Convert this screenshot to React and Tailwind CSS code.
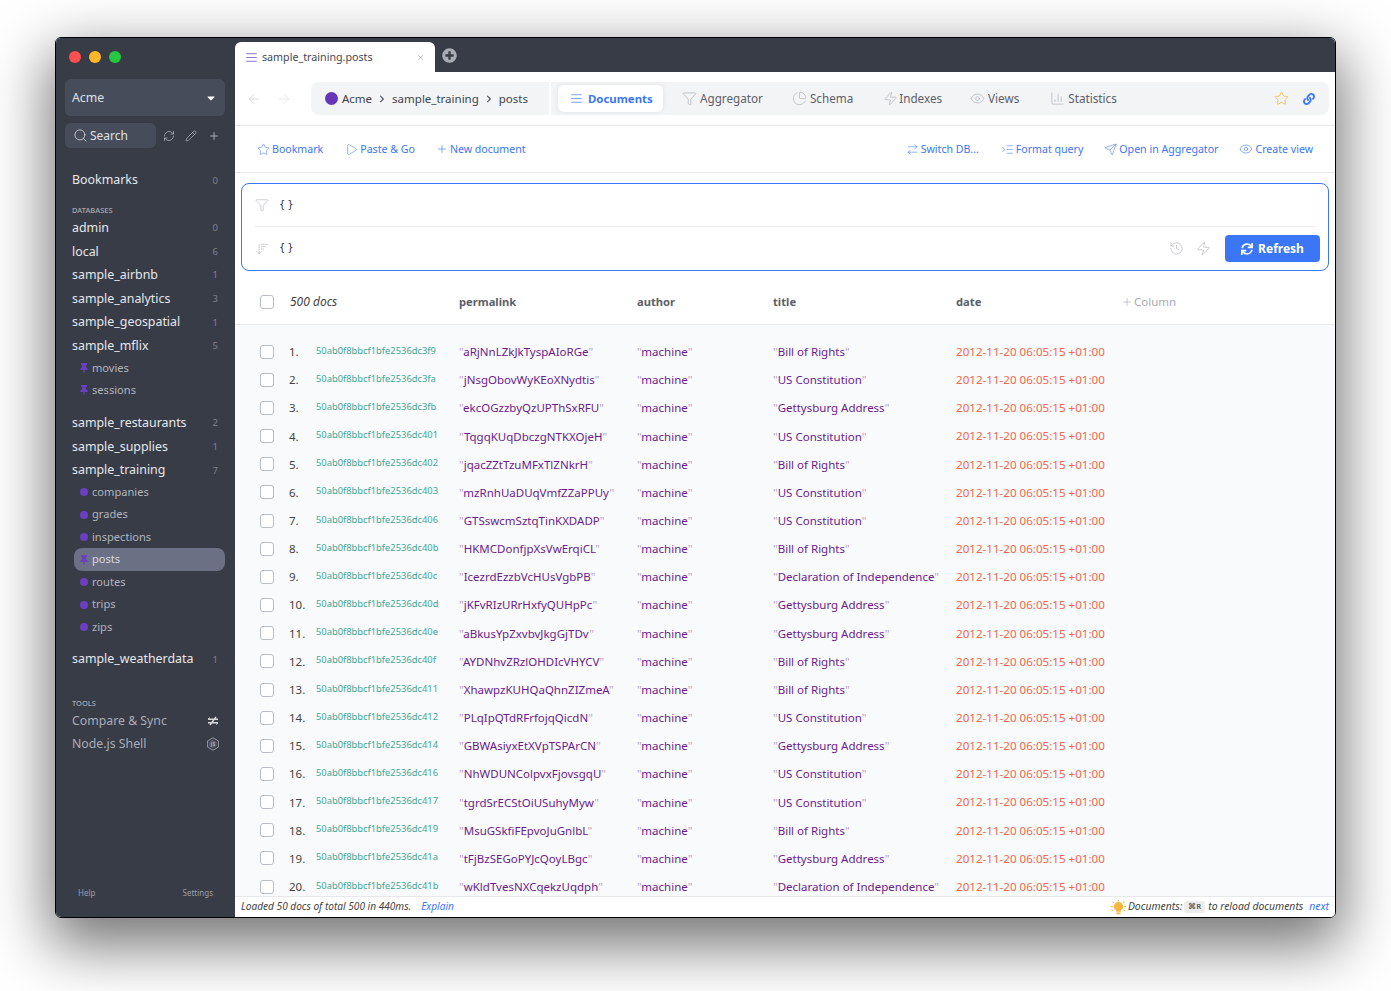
import React from "react";
import { AlignJustify, ArrowLeft, ArrowRight, Funnel, ChartPie, Zap, Eye, ChartColumn, Star, ArrowRightLeft, IndentIncrease, Send, History, Search, RefreshCw, Pencil, Plus, X, ArrowDownWideNarrow, Play } from "lucide-react";
import { FaSync, FaLink, FaPlusCircle, FaThumbtack, FaCaretDown, FaChevronRight } from "react-icons/fa";

const B = "Bill of Rights", U = "US Constitution", G = "Gettysburg Address", D = "Declaration of Independence";
const rows = [
  ["3f9", "aRjNnLZkJkTyspAIoRGe", B], ["3fa", "jNsgObovWyKEoXNydtis", U], ["3fb", "ekcOGzzbyQzUPThSxRFU", G],
  ["401", "TqgqKUqDbczgNTKXOjeH", U], ["402", "jqacZZtTzuMFxTlZNkrH", B], ["403", "mzRnhUaDUqVmfZZaPPUy", U],
  ["406", "GTSswcmSztqTinKXDADP", U], ["40b", "HKMCDonfjpXsVwErqiCL", B], ["40c", "IcezrdEzzbVcHUsVgbPB", D],
  ["40d", "jKFvRIzURrHxfyQUHpPc", G], ["40e", "aBkusYpZxvbvJkgGjTDv", G], ["40f", "AYDNhvZRzlOHDIcVHYCV", B],
  ["411", "XhawpzKUHQaQhnZIZmeA", B], ["412", "PLqIpQTdRFrfojqQicdN", U], ["414", "GBWAsiyxEtXVpTSPArCN", G],
  ["416", "NhWDUNColpvxFjovsgqU", U], ["417", "tgrdSrECStOiUSuhyMyw", U], ["419", "MsuGSkfiFEpvoJuGnlbL", B],
  ["41a", "tFjBzSEGoPYJcQoyLBgc", G], ["41b", "wKldTvesNXCqekzUqdph", D],
];

function Db({ name, n }) {
  return (
    <div className="flex h-[23.6px] items-center justify-between pl-4 pr-[17px] text-[12.4px] text-[#e5e7eb]">
      <span>{name}</span>
      <span className="text-[9.5px] text-[#7d818c]">{n}</span>
    </div>
  );
}

function Coll({ name, pin, active }) {
  return (
    <div className={`ml-[18px] mr-[10px] flex h-[22.5px] items-center gap-[4px] rounded-lg pl-[6px] text-[11.1px] ${active ? "bg-[#6b7084] text-[#d7d9df]" : "text-[#b0b4be]"}`}>
      <span className="flex w-[8px] items-center justify-center">
        {pin ? <FaThumbtack className="h-[10px] w-[10px] shrink-0 text-[#6a3fc0]" /> : <span className="h-[8px] w-[8px] shrink-0 rounded-full bg-[#6a3fc0]" />}
      </span>
      <span>{name}</span>
    </div>
  );
}

function Tab({ icon, label, cls, gap = "gap-[3px]" }) {
  return (
    <div className={`flex items-center text-[11.7px] text-[#5c606a] ${gap} ${cls}`}>
      {icon}
      <span>{label}</span>
    </div>
  );
}

function Act({ icon, label, cls = "" }) {
  return (
    <div className={`flex items-center gap-[2px] text-[10.6px] text-[#3b76f6] ${cls}`}>
      {icon}
      <span>{label}</span>
    </div>
  );
}

const Check = () => <span className="block h-[14px] w-[14px] shrink-0 rounded-[3px] border border-[#b9bdc6] bg-white" />;
const Q = ({ children }) => (
  <span className="whitespace-nowrap">
    <span className="text-[#b9a3c9]">"</span>
    {children}
    <span className="text-[#b9a3c9]">"</span>
  </span>
);

export default function App() {
  const grey = "text-[#a9acb4]";
  return (
    <div className="h-[991px] w-[1391px] overflow-hidden bg-white pl-[55px] pt-[37px] font-['Noto_Sans',sans-serif]">
      <div className="flex h-[881px] w-[1281px] overflow-hidden rounded-[6px] border border-black shadow-[0_22px_60px_6px_rgba(0,0,0,0.55)]">
        {/* Sidebar */}
        <aside className="flex w-[179px] shrink-0 flex-col bg-[#383c47]">
          <div className="flex h-[41px] shrink-0 items-start gap-[8px] pl-[13px] pt-[13px]">
            <span className="h-3 w-3 rounded-full bg-[#fc4f4f]" />
            <span className="h-3 w-3 rounded-full bg-[#fdb727]" />
            <span className="h-3 w-3 rounded-full bg-[#27c83f]" />
          </div>
          <div className="ml-[9px] mr-[10px] flex h-[37px] items-center justify-between rounded-md bg-[#474c5a] pl-[7px] pr-[8px] pt-[1px] text-[12.3px] text-[#dfe1e6]">
            <span>Acme</span>
            <FaCaretDown className="h-[12px] w-[12px] text-white" />
          </div>
          <div className="mx-[9px] mt-[7px] flex h-[25px] items-center">
            <div className="flex h-[25px] w-[91px] items-center gap-[2px] rounded-md bg-[#474c5a] pl-[8px] text-[12px] text-[#dfe1e6]">
              <Search className="h-[15px] w-[15px]" strokeWidth={1.25} />
              <span>Search</span>
            </div>
            <RefreshCw className="ml-[7px] h-[12px] w-[12px] text-[#c5c8cf]" strokeWidth={1.25} />
            <Pencil className="ml-[10px] h-[12px] w-[12px] text-[#c5c8cf]" strokeWidth={1.25} />
            <Plus className="ml-[11px] h-[12px] w-[12px] text-[#c5c8cf]" strokeWidth={1.5} />
          </div>
          <div className="mt-[21px]">
            <Db name="Bookmarks" n="0" />
          </div>
          <div className="mt-[11px] h-[13px] pl-4 text-[7.5px] font-medium leading-[13px] text-[#a4a8b2]">DATABASES</div>
          <Db name="admin" n="0" />
          <Db name="local" n="6" />
          <Db name="sample_airbnb" n="1" />
          <Db name="sample_analytics" n="3" />
          <Db name="sample_geospatial" n="1" />
          <Db name="sample_mflix" n="5" />
          <div className="-mt-[1.5px]" />
          <Coll name="movies" pin />
          <Coll name="sessions" pin />
          <div className="h-[10px]" />
          <Db name="sample_restaurants" n="2" />
          <Db name="sample_supplies" n="1" />
          <Db name="sample_training" n="7" />
          <div className="-mt-[1.5px]" />
          <Coll name="companies" />
          <Coll name="grades" />
          <Coll name="inspections" />
          <Coll name="posts" pin active />
          <Coll name="routes" />
          <Coll name="trips" />
          <Coll name="zips" />
          <div className="h-[9.5px]" />
          <Db name="sample_weatherdata" n="1" />
          <div className="mt-[25px] h-[13px] pl-4 text-[7.5px] font-medium leading-[13px] text-[#a4a8b2]">TOOLS</div>
          <div className="flex h-[23.2px] items-center justify-between pl-4 pr-[16px] text-[12.3px] text-[#a9adb7]">
            <span>Compare &amp; Sync</span>
            <svg viewBox="0 0 12 12" className="h-[12px] w-[12px] text-[#d5d7dc]" fill="none" stroke="currentColor" strokeWidth="1.4">
              <path d="M1 4.2h10M1 7.8h10M9 2 3 10" />
              <path d="M1 4.2 3 2.6M11 7.8 9 9.4" strokeWidth="1" />
            </svg>
          </div>
          <div className="flex h-[23.2px] items-center justify-between pl-4 pr-[15px] text-[12.3px] text-[#a9adb7]">
            <span>Node.js Shell</span>
            <svg viewBox="0 0 14 14" className="h-[14px] w-[14px] text-[#a9adb7]" fill="none" stroke="currentColor" strokeWidth="0.8">
              <path d="M7 .8 12.4 3.9V10.1L7 13.2 1.6 10.1V3.9Z" />
              <path d="M7 2.6 10.8 4.8V9.2L7 11.4 3.2 9.2V4.8Z" fill="currentColor" fillOpacity="0.25" stroke="none" />
              <text x="7" y="9" textAnchor="middle" fontSize="5" fontWeight="700" fill="currentColor" stroke="none">JS</text>
            </svg>
          </div>
          <div className="mb-[12px] mt-auto flex h-[24px] items-center justify-between pl-[22px] pr-[22px] text-[8px] text-[#9b9fa9]">
            <span>Help</span>
            <span>Settings</span>
          </div>
        </aside>

        {/* Main */}
        <main className="flex min-w-0 flex-1 flex-col bg-white">
          <div className="flex h-[34px] shrink-0 items-end bg-[#383c47]">
            <div className="flex h-[30px] w-[200px] items-center rounded-t-md bg-white pl-[10px] pr-[10px] text-[10.7px] text-[#454952]">
              <AlignJustify className="h-[13px] w-[13px] text-[#7a4fc9]" strokeWidth={1.5} />
              <span className="ml-[4px]">sample_training.posts</span>
              <X className="ml-auto h-[9px] w-[9px] text-[#9a9da5]" strokeWidth={1.5} />
            </div>
            <FaPlusCircle className="mb-[9px] ml-[7px] h-[15px] w-[15px] text-[#a9acb4]" />
          </div>

          <div className="flex h-[54px] shrink-0 items-center border-b border-[#e7e8ec] pr-[6px]">
            <ArrowLeft className="ml-[11px] h-[16px] w-[16px] text-[#c4c7cd]" strokeWidth={1} />
            <ArrowRight className="ml-[14px] h-[16px] w-[16px] text-[#dcdee2]" strokeWidth={1} />
            <div className="ml-[19px] flex h-[33px] w-[238px] items-center rounded-l-lg bg-[#f3f4f6] pl-[14px] text-[11.5px] text-[#3f434c]">
              <span className="h-[13px] w-[13px] rounded-full bg-[#6638b8]" />
              <span className="ml-[4px]">Acme</span>
              <FaChevronRight className="mx-[6px] h-[8px] w-[8px] text-[#555962]" />
              <span>sample_training</span>
              <FaChevronRight className="mx-[6px] h-[8px] w-[8px] text-[#555962]" />
              <span>posts</span>
            </div>
            <div className="ml-[2px] flex h-[33px] flex-1 items-center rounded-r-lg bg-[#f3f4f6] pl-[7px] pr-[14px]">
              <div className="flex h-[27px] w-[105px] items-center gap-[5px] rounded-md bg-white pl-[12px] text-[11.4px] font-bold text-[#3b76f6] shadow-[0_0_6px_rgba(0,0,0,0.08)]">
                <AlignJustify className="h-[13px] w-[13px]" strokeWidth={1.25} />
                <span>Documents</span>
              </div>
              <Tab cls="ml-[19px]" icon={<Funnel className={`h-[15px] w-[15px] ${grey}`} strokeWidth={1} />} label="Aggregator" />
              <Tab cls="ml-[29px]" icon={<ChartPie className={`h-[15px] w-[15px] ${grey}`} strokeWidth={1} />} label="Schema" />
              <Tab cls="ml-[30px]" gap="gap-[1px]" icon={<Zap className={`h-[15px] w-[15px] ${grey}`} strokeWidth={1} />} label="Indexes" />
              <Tab cls="ml-[28px]" icon={<Eye className={`h-[15px] w-[15px] ${grey}`} strokeWidth={1} />} label="Views" />
              <Tab cls="ml-[31px]" icon={<ChartColumn className={`h-[15px] w-[15px] ${grey}`} strokeWidth={1} />} label="Statistics" />
              <Star className="ml-auto h-[15px] w-[15px] text-[#f6b73c]" strokeWidth={1.25} />
              <FaLink className="ml-[14px] h-[12px] w-[12px] text-[#3b76f6]" />
            </div>
          </div>

          <div className="flex h-[47px] shrink-0 items-center border-b border-[#e7e8ec] pl-[22px] pr-[22px] pt-[1px]">
            <Act icon={<Star className="h-[13px] w-[13px]" strokeWidth={1} />} label="Bookmark" />
            <Act cls="ml-[22px]" icon={<Play className="h-[13px] w-[13px]" strokeWidth={1} />} label="Paste & Go" />
            <Act cls="ml-[21px]" icon={<Plus className="h-[12px] w-[12px]" strokeWidth={1.25} />} label="New document" />
            <Act cls="ml-auto" icon={<ArrowRightLeft className="h-[13px] w-[13px]" strokeWidth={1} />} label="Switch DB..." />
            <Act cls="ml-[22px]" icon={<IndentIncrease className="h-[13px] w-[13px]" strokeWidth={1} />} label="Format query" />
            <Act cls="ml-[21px]" icon={<Send className="h-[13px] w-[13px]" strokeWidth={1} />} label="Open in Aggregator" />
            <Act cls="ml-[21px]" icon={<Eye className="h-[14px] w-[14px]" strokeWidth={1} />} label="Create view" />
          </div>

          <div className="mx-[6px] mt-[10px] h-[88px] shrink-0 rounded-lg border border-[#3b76f6] px-[13px]">
            <div className="flex h-[43px] items-center border-b border-[#e9eaed]">
              <Funnel className="h-[14px] w-[14px] text-[#a9acb4]" strokeWidth={1} />
              <span className="ml-[10px] -translate-y-[1px] font-['DejaVu_Sans',sans-serif] text-[10px] tracking-[2px] text-[#333]">{"{}"}</span>
            </div>
            <div className="flex h-[43px] items-center">
              <ArrowDownWideNarrow className="h-[14px] w-[14px] text-[#a9acb4]" strokeWidth={1} />
              <span className="ml-[10px] -translate-y-[1px] font-['DejaVu_Sans',sans-serif] text-[10px] tracking-[2px] text-[#333]">{"{}"}</span>
              <History className="ml-auto h-[15px] w-[15px] text-[#a9acb4]" strokeWidth={1} />
              <Zap className="ml-[12px] h-[15px] w-[15px] text-[#a9acb4]" strokeWidth={1} />
              <div className="-mr-[5px] ml-[14px] flex h-[27px] w-[95px] items-center justify-center gap-[5px] rounded-[4px] bg-[#3b76f6] text-[12px] font-bold text-white">
                <FaSync className="h-[12px] w-[12px]" />
                <span>Refresh</span>
              </div>
            </div>
          </div>

          <div className="flex h-[54px] shrink-0 items-center border-b border-[#e7e8ec] pl-[25px] pt-[8px] text-[11.2px] font-bold text-[#5c606a]">
            <Check />
            <span className="ml-[16px] w-[169px] text-[12px] font-normal italic text-[#444]">500 docs</span>
            <span className="w-[178px] translate-y-[1px]">permalink</span>
            <span className="w-[136px] translate-y-[1px]">author</span>
            <span className="w-[183px] translate-y-[1px]">title</span>
            <span className="w-[165px] translate-y-[1px]">date</span>
            <span className="flex items-center gap-[1px] text-[11.5px] font-normal text-[#a6a9b0]">
              <Plus className="h-[12px] w-[12px]" strokeWidth={1.25} />
              Column
            </span>
          </div>

          <div className="min-h-0 flex-1 overflow-hidden bg-[#f9fafb] pt-[12.6px]">
            {rows.map((r, i) => (
              <div key={r[0]} className="flex h-[28.16px] items-center pl-[25px] text-[11.5px]">
                <Check />
                <span className="ml-[15px] w-[27px] text-[#444]">{i + 1}.</span>
                <span className="w-[143px] -translate-y-[1px] text-[9.35px] text-[#3fa796]">50ab0f8bbcf1bfe2536dc{r[0]}</span>
                <span className="w-[178px] text-[#6b1a8f]"><Q>{r[1]}</Q></span>
                <span className="w-[136px] text-[#6b1a8f]"><Q>machine</Q></span>
                <span className="w-[183px] text-[#6b1a8f]"><Q>{r[2]}</Q></span>
                <span className="whitespace-nowrap text-[11.6px] text-[#f4664a]">2012-11-20 06:05:15 +01:00</span>
              </div>
            ))}
          </div>

          <div className="flex h-[21px] shrink-0 items-center border-t border-[#e7e8ec] bg-white pl-[6px] pr-[6px] text-[10.1px] italic text-[#444]">
            <span>Loaded 50 docs of total 500 in 440ms.</span>
            <span className="ml-[10px] text-[#3b76f6]">Explain</span>
            <svg viewBox="0 0 14 14" className="ml-auto h-[15px] w-[15px] text-[#f6b73c]" fill="currentColor">
              <path d="M7 1.8a4.2 4.2 0 0 0-2.2 7.8V11h4.4V9.6A4.2 4.2 0 0 0 7 1.8ZM5 11.6h4V13.4H5Z" />
              <path d="M7 0v1.5M1.5 1.5l1.2 1.2M12.5 1.5l-1.2 1.2M0 6h1.8M12.2 6H14M1 10l1.3-1M13 10l-1.3-1" stroke="currentColor" strokeWidth="1" fill="none" />
            </svg>
            <span className="ml-[2px] text-[10.4px]">Documents:</span>
            <span className="ml-[2px] rounded-[3px] bg-[#eceded] px-[4px] text-[7.5px] font-bold not-italic text-[#666]">⌘R</span>
            <span className="ml-[3px] text-[10.4px]">to reload documents</span>
            <span className="ml-[6px] text-[10.4px] text-[#3b76f6]">next</span>
          </div>
        </main>
      </div>
    </div>
  );
}
